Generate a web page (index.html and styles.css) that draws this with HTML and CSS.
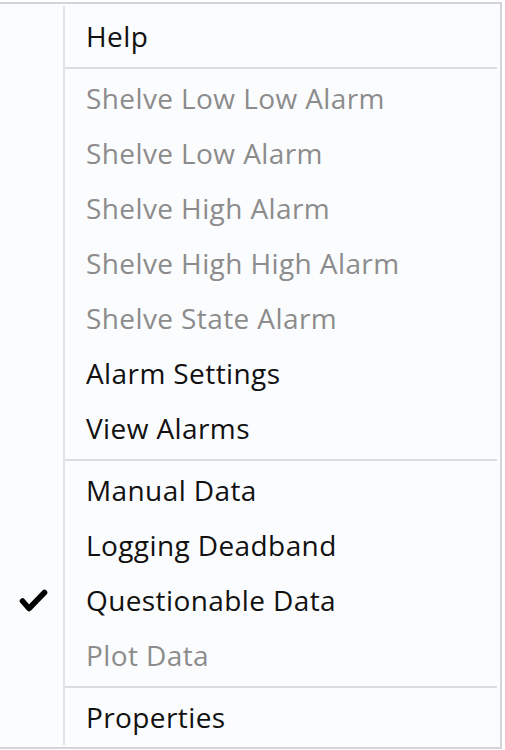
FILE: index.html
```html
<!DOCTYPE html>
<html lang="en">
<head>
<meta charset="utf-8">
<title>Context menu</title>
<link rel="stylesheet" href="styles.css">
</head>
<body>
<div class="page">
  <div class="menu">
    <div class="item first"><span class="gutter"></span><span class="label">Help</span></div>
    <div class="sep"><span class="gutter"></span><span class="line"></span></div>
    <div class="item disabled"><span class="gutter"></span><span class="label">Shelve Low Low Alarm</span></div>
    <div class="item disabled"><span class="gutter"></span><span class="label">Shelve Low Alarm</span></div>
    <div class="item disabled"><span class="gutter"></span><span class="label">Shelve High Alarm</span></div>
    <div class="item disabled"><span class="gutter"></span><span class="label">Shelve High High Alarm</span></div>
    <div class="item disabled"><span class="gutter"></span><span class="label">Shelve State Alarm</span></div>
    <div class="item"><span class="gutter"></span><span class="label">Alarm Settings</span></div>
    <div class="item"><span class="gutter"></span><span class="label">View Alarms</span></div>
    <div class="sep"><span class="gutter"></span><span class="line"></span></div>
    <div class="item"><span class="gutter"></span><span class="label">Manual Data</span></div>
    <div class="item"><span class="gutter"></span><span class="label">Logging Deadband</span></div>
    <div class="item"><span class="gutter"><svg class="check" width="30" height="26" viewBox="0 0 30 26"><path d="M4.5 13 L11 20.5 L26.5 4.5" fill="none" stroke="#000" stroke-width="5.6" stroke-linecap="round" stroke-linejoin="round"/></svg></span><span class="label">Questionable Data</span></div>
    <div class="item disabled"><span class="gutter"></span><span class="label">Plot Data</span></div>
    <div class="sep"><span class="gutter"></span><span class="line"></span></div>
    <div class="item last"><span class="gutter"></span><span class="label">Properties</span></div>
  </div>
</div>
</body>
</html>
```
FILE: styles.css
```css
html, body {
  margin: 0;
  padding: 0;
  background: #ffffff;
}

.page {
  width: 505px;
  height: 750px;
  padding-top: 2px;
  box-sizing: border-box;
  overflow: hidden;
}

.menu {
  width: 502px;
  box-sizing: border-box;
  background: #fbfcfe;
  border-top: 2px solid #d2d4d7;
  border-right: 2px solid #d2d4d7;
  border-bottom: 2px solid #d2d4d7;
  padding: 2px 3px 2px 0;
  display: flex;
  flex-direction: column;
  font-family: "Open Sans", "Noto Sans", sans-serif;
  font-size: 28px;
  letter-spacing: 0.4px;
  color: #111111;
}

.item {
  display: flex;
  align-items: center;
  height: 55px;
}

.item.first {
  height: 58px;
}

.item.first .label {
  margin-top: 3px;
}

.gutter {
  flex: 0 0 63px;
  align-self: stretch;
  border-right: 2px solid #e2e3e6;
  display: flex;
  align-items: center;
  justify-content: center;
}

.label {
  padding-left: 21px;
  line-height: 55px;
  white-space: nowrap;
}

.disabled .label {
  color: #8c8c8c;
}

.sep {
  display: flex;
  height: 7px;
}

.sep .line {
  flex: 1;
  margin-top: 3px;
  height: 2px;
  background: #dcdddf;
}

.check {
  margin-left: 3px;
  margin-top: 0;
}
```
